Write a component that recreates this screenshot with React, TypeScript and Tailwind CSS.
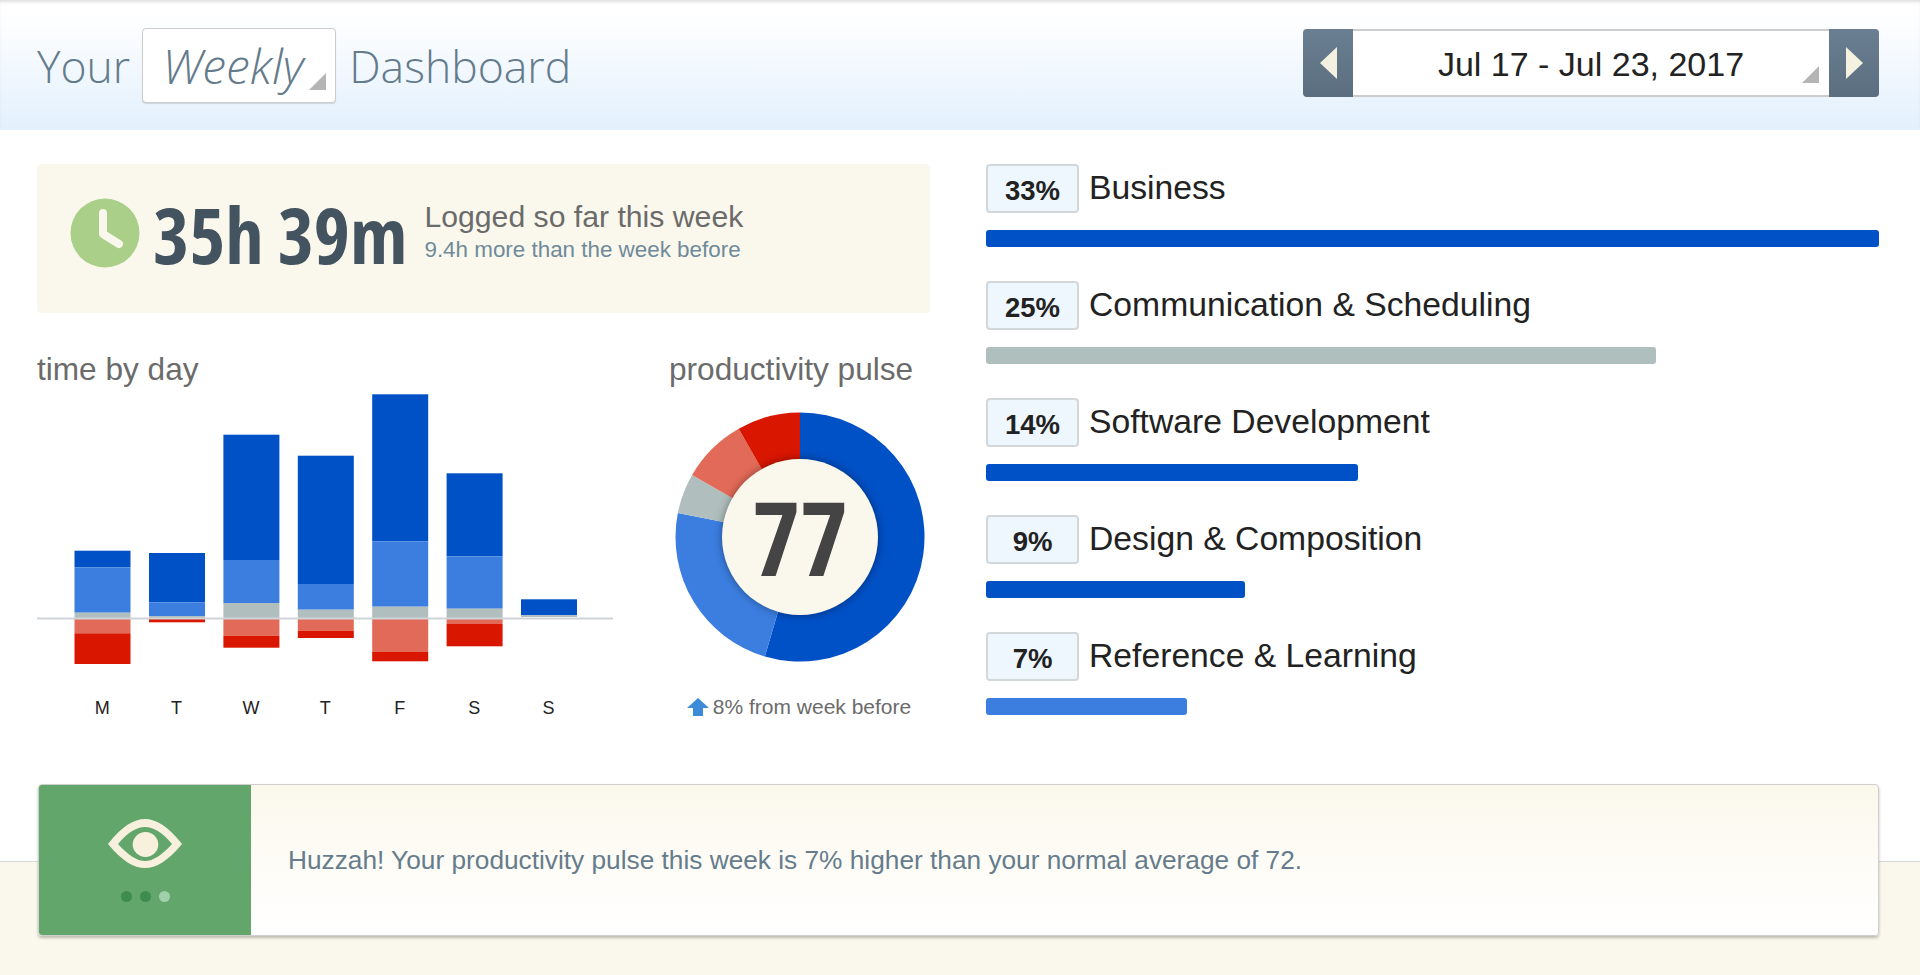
import React from 'react';

const DARK = '#0050c6';
const MID = '#3b7ee0';
const GRAY = '#b0bfbe';
const SALMON = '#e26a58';
const RED = '#d91600';

interface DayBar {
  label: string;
  x: number;
  segments: [number, number, string][];
}

const days: DayBar[] = [
  { label: 'M', x: 74.5, segments: [[550.7, 567.3, DARK], [567.3, 612.7, MID], [612.7, 618, GRAY], [619, 633.3, SALMON], [633.3, 664, RED]] },
  { label: 'T', x: 149, segments: [[553, 602.3, DARK], [602.3, 616, MID], [616, 618, GRAY], [619, 622.3, RED]] },
  { label: 'W', x: 223.4, segments: [[434.7, 560, DARK], [560, 603, MID], [603, 618, GRAY], [619, 635.7, SALMON], [635.7, 647.7, RED]] },
  { label: 'T', x: 297.8, segments: [[455.7, 584, DARK], [584, 609.7, MID], [609.7, 618, GRAY], [619, 630.7, SALMON], [630.7, 638, RED]] },
  { label: 'F', x: 372.2, segments: [[394.3, 541.3, DARK], [541.3, 606.7, MID], [606.7, 618, GRAY], [619, 652, SALMON], [652, 661.3, RED]] },
  { label: 'S', x: 446.6, segments: [[473.3, 556.3, DARK], [556.3, 608.7, MID], [608.7, 618, GRAY], [619, 624, SALMON], [624, 646.3, RED]] },
  { label: 'S', x: 521, segments: [[599.3, 615.3, DARK], [615.3, 617, GRAY]] },
];

const categories = [
  { pct: '33%', name: 'Business', width: 893, color: DARK },
  { pct: '25%', name: 'Communication & Scheduling', width: 670, color: '#afbfbe' },
  { pct: '14%', name: 'Software Development', width: 372, color: DARK },
  { pct: '9%', name: 'Design & Composition', width: 259, color: DARK },
  { pct: '7%', name: 'Reference & Learning', width: 201, color: MID },
];

const pulseSlices: [number, number, string][] = [
  [0, 196.4, DARK],
  [196.4, 281.1, MID],
  [281.1, 299.9, GRAY],
  [299.9, 330.5, SALMON],
  [330.5, 360, RED],
];

// donut slice from the 12 o'clock position, clockwise
function slicePath(from: number, to: number, r: number, c: number) {
  const point = (deg: number) => {
    const a = ((deg - 90) * Math.PI) / 180;
    return `${(c + r * Math.cos(a)).toFixed(2)} ${(c + r * Math.sin(a)).toFixed(2)}`;
  };
  const large = to - from > 180 ? 1 : 0;
  return `M${c} ${c}L${point(from)}A${r} ${r} 0 ${large} 1 ${point(to)}Z`;
}

const Corner = () => (
  <svg width="17" height="17" viewBox="0 0 17 17" className="absolute">
    <path d="M17 0V17H0Z" fill="#b5b5b5" />
  </svg>
);

const Header = () => (
  <div className="h-[130px] flex items-center justify-between pl-[37px] pr-[41px] bg-gradient-to-b from-white from-[10%] to-[#e3f0fd] shadow-[inset_0_3px_3px_-1px_rgba(0,0,0,0.12)]">
    <div className="flex items-center font-['Open_Sans',sans-serif] font-light text-[44.5px] text-[#647b8c]">
      <span className="pt-[2px]">Your</span>
      <div className="relative ml-[12px] mr-[13px] w-[194px] h-[75px] flex items-center pl-[19px] pt-[2px] bg-white border border-[#ccc] rounded shadow-[0_1px_1px_rgba(0,0,0,0.12)] italic text-[48px] whitespace-nowrap">
        Weekly
        <div className="absolute right-[26px] bottom-[29px]"><Corner /></div>
      </div>
      <span className="pt-[2px]">Dashboard</span>
    </div>
    <div className="flex h-[68px] w-[576px] -mt-1">
      <button className="w-[50px] bg-gradient-to-b from-[#6a7f91] to-[#5a6e80] rounded-l flex items-center justify-center">
        <svg width="17" height="32" viewBox="0 0 17 32"><path d="M17 0V32L0 16Z" fill="#f5f1e0" /></svg>
      </button>
      <div className="relative flex-1 flex items-center justify-center pt-[3px] bg-white border-y-2 border-[#ccc] font-['Liberation_Sans',sans-serif] text-[34px] text-[#222]">
        Jul 17 - Jul 23, 2017
        <div className="absolute right-[27px] bottom-[29px]"><Corner /></div>
      </div>
      <button className="w-[50px] bg-gradient-to-b from-[#6a7f91] to-[#5a6e80] rounded-r flex items-center justify-center">
        <svg width="17" height="32" viewBox="0 0 17 32"><path d="M0 0V32L17 16Z" fill="#f5f1e0" /></svg>
      </button>
    </div>
  </div>
);

const LoggedCard = () => (
  <div className="h-[149px] bg-[#faf8ec] rounded flex items-center pl-[33px] pb-[12px]">
    <svg width="70" height="70" viewBox="0 0 70 70" className="shrink-0">
      <circle cx="35" cy="35" r="34.5" fill="#a9cf88" />
      <path d="M33 15V36L49 46" fill="none" stroke="#faf8ec" strokeWidth="8" strokeLinecap="round" strokeLinejoin="round" />
    </svg>
    <div className="ml-[13px] pt-[4px] font-['Open_Sans',sans-serif] font-bold [font-stretch:75%] text-[77px] leading-none text-[#43535f] whitespace-nowrap">35h 39m</div>
    <div className="ml-[17px] -mt-[2px] font-['Liberation_Sans',sans-serif]">
      <div className="text-[30.2px] leading-[36px] text-[#6b6b6b]">Logged so far this week</div>
      <div className="text-[22.4px] leading-[29px] text-[#6f8a9b]">9.4h more than the week before</div>
    </div>
  </div>
);

const TimeByDay = () => (
  <div className="w-[577px]">
    <h2 className="font-['Liberation_Sans',sans-serif] text-[31.6px] leading-[36px] -mt-[1px] text-[#6b6b6b]">time by day</h2>
    <svg width="577" height="280" viewBox="37 390 577 280" className="mt-[3px] block">
      {days.map((d, i) =>
        d.segments.map(([top, bottom, color], j) => (
          <rect key={`${i}-${j}`} x={d.x} y={top} width="56" height={bottom - top} fill={color} />
        ))
      )}
      <rect x="37" y="617.5" width="576" height="2" fill="#cfd4d8" />
    </svg>
    <div className="flex pl-[28px] mt-[28px] font-['Liberation_Sans',sans-serif] text-[18px] leading-[20px] text-[#222]">
      {days.map((d, i) => (
        <span key={i} className="w-[74.4px] text-center">{d.label}</span>
      ))}
    </div>
  </div>
);

const ProductivityPulse = () => (
  <div className="w-[260px]">
    <h2 className="font-['Liberation_Sans',sans-serif] text-[31.6px] leading-[36px] -mt-[1px] text-[#6b6b6b] whitespace-nowrap">productivity pulse</h2>
    <div className="relative w-[250px] h-[250px] ml-[6px] mt-[25px]">
      <svg width="250" height="250" viewBox="0 0 250 250">
        {pulseSlices.map(([from, to, color]) => (
          <path key={from} d={slicePath(from, to, 124.5, 125)} fill={color} />
        ))}
        <circle cx="125" cy="125" r="78" fill="#faf8ec" className="drop-shadow-[0_0_4px_rgba(0,0,0,0.4)]" />
      </svg>
      <div className="absolute inset-0 flex items-center justify-center font-['Open_Sans',sans-serif] font-bold [font-stretch:75%] text-[102px] leading-none text-[#444]">77</div>
    </div>
    <div className="flex items-center justify-center mt-[33px] font-['Liberation_Sans',sans-serif] text-[21px] leading-[24px] text-[#6b6b6b]">
      <svg width="22" height="18" viewBox="0 0 22 18" className="mr-1">
        <path d="M11 0L22 10H16V18H6V10H0Z" fill="#3d8ad8" />
      </svg>
      8% from week before
    </div>
  </div>
);

const CategoryRow = ({ pct, name, width, color }: (typeof categories)[number]) => (
  <div className="h-[117px]">
    <div className="flex items-center h-[49px]">
      <span className="w-[93px] h-[49px] flex items-center justify-center pt-[4px] bg-[#eef6fe] border-2 border-[#d2d7da] rounded font-bold text-[27.5px] text-[#222]">{pct}</span>
      <span className="ml-[10px] -mt-[3px] text-[33.7px] text-[#222] whitespace-nowrap">{name}</span>
    </div>
    <div className="h-[17px] mt-[17px] rounded-[3px]" style={{ width, backgroundColor: color }} />
  </div>
);

const InsightCard = () => (
  <div className="relative h-[152px] mr-[41px] ml-[38px] -mt-[78px] flex rounded border border-[#cfcfcf] overflow-hidden shadow-[0_2px_3px_rgba(0,0,0,0.25)] bg-gradient-to-b from-[#fbf8ec] to-white">
    <div className="w-[212px] bg-[#62a66c] flex flex-col items-center justify-center">
      <svg width="76" height="52" viewBox="107 818 76 52">
        <path
          fillRule="evenodd"
          d="M108 844C122 826 134 819 145 819C156 819 168 826 182 844C168 861 156 868 145 868C134 868 122 861 108 844ZM118 844C128 855 137 861 145 861C153 861 162 855 172 844C162 832 153 827 145 827C137 827 128 832 118 844Z"
          fill="#f7f0dc"
        />
        <ellipse cx="145.5" cy="844.5" rx="12.8" ry="12.5" fill="#f7f0dc" />
      </svg>
      <div className="flex gap-[8px] mt-[21px]">
        <span className="w-[11px] h-[11px] rounded-full bg-[#3f8c50]" />
        <span className="w-[11px] h-[11px] rounded-full bg-[#3f8c50]" />
        <span className="w-[11px] h-[11px] rounded-full bg-[#9fd0aa]" />
      </div>
    </div>
    <div className="flex-1 flex items-center pl-[37px] pt-[2px] font-['Liberation_Sans',sans-serif] text-[26.25px] text-[#667c8c]">
      Huzzah! Your productivity pulse this week is 7% higher than your normal average of 72.
    </div>
  </div>
);

export default function App() {
  return (
    <div className="h-[975px] bg-white overflow-hidden font-['Liberation_Sans',sans-serif]">
      <Header />
      <div className="flex h-[732px] pl-[37px] pr-[41px] pt-[34px] gap-[56px] border-b border-[#d5d8da] bg-white">
        <div className="w-[893px] shrink-0">
          <LoggedCard />
          <div className="flex gap-[55px] mt-[39px]">
            <TimeByDay />
            <ProductivityPulse />
          </div>
        </div>
        <div className="flex-1">
          {categories.map(c => (
            <CategoryRow key={c.name} {...c} />
          ))}
        </div>
      </div>
      <div className="flow-root h-[113px] bg-[#faf8ec]">
        <InsightCard />
      </div>
    </div>
  );
}
